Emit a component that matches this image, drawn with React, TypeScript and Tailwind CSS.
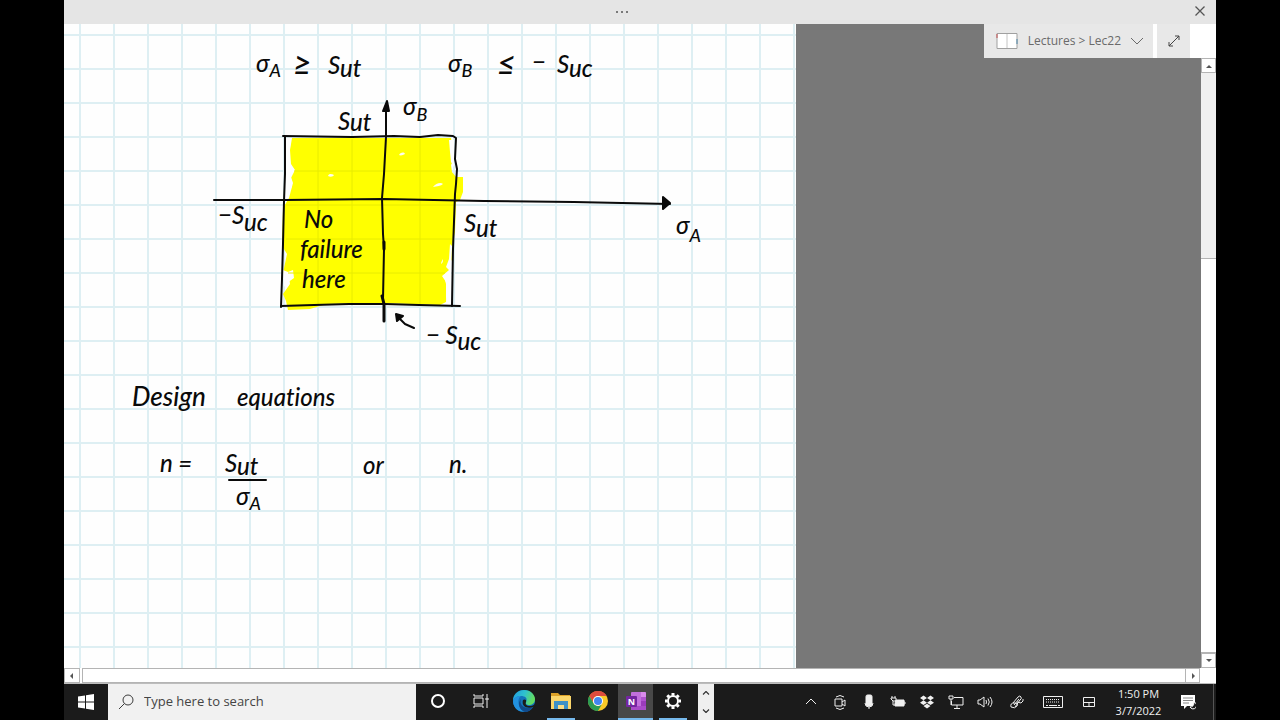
import type { ReactNode } from "react";

const GRID_X = Array.from({ length: 22 }, (_, i) => 16 + i * 34);
const GRID_Y = Array.from({ length: 19 }, (_, i) => 11 + i * 34);

type InkProps = { x: number; y: number; size?: number; sub?: string; subY?: number; children: string };

function Ink({ x, y, size = 24, sub, subY = 5, children }: InkProps) {
  return (
    <text x={x} y={y} fontSize={size}>
      {children}
      {sub && (
        <tspan dy={subY} fontSize={sub.length > 1 ? 24 : 18}>
          {sub}
        </tspan>
      )}
    </text>
  );
}

function NotePage() {
  return (
    <svg
      viewBox="0 0 732 644"
      preserveAspectRatio="xMinYMin slice"
      className="h-full w-full font-['Lato','Noto_Sans',sans-serif] font-medium italic [font-variant-ligatures:none]"
      role="img"
      aria-label="Handwritten notes"
    >
      <rect width="732" height="644" fill="#fefefe" />
      <g stroke="#deeff3" strokeWidth="2">
        {GRID_X.map((x) => (
          <path key={x} d={`M${x} 0V644`} />
        ))}
        {GRID_Y.map((y) => (
          <path key={y} d={`M0 ${y}H732`} />
        ))}
      </g>
      <path
        fill="#ffff00"
        d="M227 114 387 114 388 124 390 135 387 141 388 148 392 153 399 153 399 168 396 176 392 178 391 208 388 222 389 234 385 240 386 248 381 256 383 264 382 278 376 281 318 279 262 280 246 285 224 286 222 277 219 270 226 260 225 252 219 249 223 230 218 222 219 184 225 174 229 159 224 144Z"
      />
      <path
        fill="#fefefe"
        d="M224 114h4l-2 12 1 14 4 6-4 8 1 8-4 10h-3V115ZM385 116h5v27l-3-5-1-10ZM219 246l5 2 5-2 1 8-7 5-3 4ZM386 220l2 2-1 28-2 4 1 18-3 7-1-6v-15l-4-6 7-6-3-3 3-8Z"
      />
      <g stroke="#e8ec00" strokeWidth="1">
        <path d="M254 115V281M288 115V279M356 115V280M230 147H386M222 181H391M222 215H388M224 249H381" />
      </g>
      <g fill="#fdfdf0">
        <path d="M264 152c1-3 4-2 6-1-1 2-4 2-6 1Z" />
        <path d="M335 131c2-3 5-3 6-1-2 1-4 2-6 1Z" />
        <path d="M369 163c3-4 8-5 10-3-2 2-6 2-10 3Z" />
        <path d="M377 240c2-1 2-3 2-5-1 2-2 3-2 5Z" />
      </g>
      <g fill="none" stroke="#0a0a0a" strokeWidth="2" strokeLinecap="round" strokeLinejoin="round">
        <path d="M219 112 288 113 330 112 356 113 374 111 389 112 392 114 391 135 393 145 392 160 391 170 389 225 388 282" />
        <path d="M221 113 221 150 220 177 219 220 218 255 217 283" />
        <path d="M217 282 250 281 285 280 321 280 355 281 396 282" />
        <path d="M150 176 220 176 320 175 420 177 510 178 606 180" />
        <path d="M322 83 322 113 320 150 318 174 319 210 320 225 319 275" />
        <path strokeWidth="3" d="M320 218 320 225M318 272 320 280 320 297" />
        <path fill="#0a0a0a" d="M323 77 319 87 325 87Z" />
        <path fill="#0a0a0a" d="M599 173 606 179 599 185Z" />
        <path d="M350 304 341 300 333 292" />
        <path fill="#0a0a0a" d="M332 290 333 297 339 292Z" />
        <path d="M165 456 186 456 202 456" />
      </g>
      <g fill="#0a0a0a">
        <Ink x={192} y={48} sub="A">σ</Ink>
        <Ink x={229} y={51} size={32}>≥</Ink>
        <Ink x={264} y={50} sub="ut" subY={3}>S</Ink>
        <Ink x={384} y={48} sub="B">σ</Ink>
        <Ink x={433} y={51} size={32}>≤</Ink>
        <Ink x={468} y={47}>−</Ink>
        <Ink x={493} y={49} sub="uc" subY={4}>S</Ink>
        <Ink x={339} y={91} sub="B" subY={6}>σ</Ink>
        <Ink x={274} y={106} sub="ut" subY={1}>S</Ink>
        <Ink x={154} y={200} sub="uc" subY={7}>−S</Ink>
        <Ink x={400} y={208} sub="ut" subY={5}>S</Ink>
        <Ink x={612} y={210} sub="A" subY={8}>σ</Ink>
        <Ink x={240} y={204}>No</Ink>
        <Ink x={236} y={234}>failure</Ink>
        <Ink x={238} y={264}>here</Ink>
        <Ink x={362} y={320} sub="uc" subY={6}>− S</Ink>
        <Ink x={68} y={382} size={26}>Design</Ink>
        <Ink x={173} y={382}>equations</Ink>
        <Ink x={96} y={448}>n =</Ink>
        <Ink x={161} y={448} sub="ut" subY={3}>S</Ink>
        <Ink x={172} y={481} sub="A">σ</Ink>
        <Ink x={299} y={450}>or</Ink>
        <Ink x={385} y={449}>n.</Ink>
      </g>
    </svg>
  );
}

function Line({ children, className = "size-4" }: { children: ReactNode; className?: string }) {
  return (
    <svg
      viewBox="0 0 16 16"
      className={className}
      fill="none"
      stroke="currentColor"
      strokeWidth="1"
      strokeLinejoin="round"
      aria-hidden="true"
    >
      {children}
    </svg>
  );
}

function ScrollButton({ label, d, className }: { label: string; d: string; className: string }) {
  return (
    <button
      type="button"
      aria-label={label}
      className={`flex shrink-0 items-center justify-center border border-[#b4b4b4] bg-white text-[#555] ${className}`}
    >
      <svg viewBox="0 0 8 8" className="size-2" fill="currentColor" aria-hidden="true">
        <path d={d} />
      </svg>
    </button>
  );
}

function SidePanel() {
  return (
    <div className="flex min-w-0 flex-1 flex-col bg-[#787878]">
      <div className="flex h-[34px] justify-end">
        <button
          type="button"
          className="flex items-center bg-[#e8e8e8] pr-2 pl-3 text-xs whitespace-nowrap text-[#6a6a6a]"
        >
          <svg viewBox="0 0 22 18" className="mr-2.5 h-[18px] w-[22px]" aria-hidden="true">
            <path d="M1 1.500h20v15H1Z" fill="#fff" stroke="#a0a0a0" />
            <path d="M11 2v14" stroke="#c4c4c4" strokeWidth="1" />
            <path d="M1 2v4" stroke="#c65050" />
            <path d="M21 7v5" stroke="#4f87a8" />
          </svg>
          <span>Lectures &gt; Lec22</span>
          <Line className="ml-2 size-4">
            <path d="m2 5 6 6 6-6" />
          </Line>
        </button>
        <div className="w-1 bg-white" />
        <button
          type="button"
          aria-label="Full screen"
          className="flex w-[33px] items-center justify-center bg-[#e8e8e8] text-[#444]"
        >
          <Line>
            <path d="M3 13 13 3M9 3h4v4M3 9v4h4" />
          </Line>
        </button>
        <div className="w-[26px] bg-white" />
      </div>
      <div className="flex flex-1 justify-end">
        <div className="flex w-[15px] flex-col bg-[#f0f0f0]">
          <ScrollButton label="Scroll up" d="M1 6 4 3l3 3Z" className="h-[15px]" />
          <div className="h-[185px] bg-[#f0f0f0]" />
          <div className="flex-1 border-y border-[#b4b4b4] bg-white" />
          <ScrollButton label="Scroll down" d="M1 2h6L4 5Z" className="h-[15px]" />
        </div>
      </div>
    </div>
  );
}

function EdgeIcon() {
  return (
    <svg viewBox="0 0 24 24" className="size-6" aria-hidden="true">
      <defs>
        <linearGradient id="edge-top" x1="0" x2="1" y1="0" y2="0.3">
          <stop offset="0" stopColor="#1f9be0" />
          <stop offset="0.55" stopColor="#2fc1cf" />
          <stop offset="1" stopColor="#62dc62" />
        </linearGradient>
      </defs>
      <circle cx="12" cy="12" r="11" fill="#1473ba" />
      <path d="M1 12C1 5 6 1 12 1c7 0 11 5 11 9 0 4-3 6-6 6-2 0-4-1-3-3 2-4-1-6-5-6-4 0-7 2-8 5Z" fill="url(#edge-top)" />
      <path d="M1 12c1-3 4-5 8-5-4 2-4 12 4 15C6 24 1 18 1 12Z" fill="#2291df" />
      <path d="M9 10c-2 5 2 9 7 9 3 0 4-1 5-1-2 3-5 5-8 5-6-2-8-9-4-13Z" fill="#114a8b" />
      <path d="M11 11c1-1 4-1 3 2-1 2 0 4 4 4 3 0 5-2 5-3 0 3-1 4-2 4-5 2-12 0-10-7Z" fill="#1b1b1b" />
    </svg>
  );
}

function FolderIcon() {
  return (
    <svg viewBox="0 0 22 20" className="h-5 w-[22px]" aria-hidden="true">
      <path d="M1 2h7l2 2h10v4H1Z" fill="#dca127" />
      <path d="M1 5h20v13H1Z" fill="#fbd66b" />
      <path d="M4 18v-8h14v8h-4v-4H8v4Z" fill="#3e91c7" />
      <path d="M8 14h6v4H8Z" fill="#f8dc88" />
    </svg>
  );
}

function ChromeIcon() {
  return (
    <svg viewBox="0 0 20 20" className="size-5" aria-hidden="true">
      <circle cx="10" cy="10" r="10" fill="#f9c927" />
      <path d="M1.3 5A10 10 0 0 1 18.7 5H10a5 5 0 0 0-4.3 7.5Z" fill="#dd4b3e" />
      <path d="M1.3 5A10 10 0 0 0 10 20l4.3-7.5a5 5 0 0 1-8.6 0Z" fill="#2c9c53" />
      <circle cx="10" cy="10" r="5" fill="#fff" />
      <circle cx="10" cy="10" r="4" fill="#4386ef" />
    </svg>
  );
}

function OneNoteIcon() {
  return (
    <svg viewBox="0 0 20 20" className="size-5" aria-hidden="true">
      <rect x="5" y="1" width="15" height="18" rx="1" fill="#c270dc" />
      <path d="M15 1h4l1 1v4h-5Z" fill="#d98bec" />
      <path d="M15 6h5v4h-5Z" fill="#b154d0" />
      <path d="M15 10h5v5h-5Z" fill="#9a3bbb" />
      <path d="M5 15h15v3l-1 1H6l-1-1Z" fill="#a94bc9" />
      <rect x="0" y="5" width="11" height="11" rx="1" fill="#7425a0" />
      <text x="5.5" y="14" fontSize="9" fontWeight="700" textAnchor="middle" fill="#fff">
        N
      </text>
    </svg>
  );
}

function GearIcon() {
  return (
    <svg viewBox="0 0 18 18" className="size-[18px]" fill="none" stroke="#fff" aria-hidden="true">
      <circle cx="9" cy="9" r="5" strokeWidth="2" />
      <path
        strokeWidth="3"
        d="M9 1v2.500M9 14.500V17M1 9h2.500M14.500 9H17M3.300 3.300l1.800 1.800M12.900 12.900l1.800 1.800M3.300 14.700l1.800-1.800M12.900 5.100l1.800-1.800"
      />
    </svg>
  );
}

type AppButtonProps = { label: string; width: string; open?: boolean; active?: boolean; children: ReactNode };

function AppButton({ label, width, open, active, children }: AppButtonProps) {
  return (
    <button
      type="button"
      aria-label={label}
      className={`flex shrink-0 flex-col items-center ${width} ${active ? "bg-[#484848]" : ""}`}
    >
      <span className="flex flex-1 items-center">{children}</span>
      <span className={`h-0.5 ${active ? "w-full" : "w-7"} ${open ? "bg-[#76b9ed]" : ""}`} />
    </button>
  );
}

function TrayButton({ label, width = "w-[29px]", children }: { label: string; width?: string; children: ReactNode }) {
  return (
    <button type="button" aria-label={label} className={`flex shrink-0 items-center justify-center ${width}`}>
      {children}
    </button>
  );
}

function Taskbar() {
  return (
    <footer className="flex h-9 bg-[#1b1b1b] text-[#f0f0f0]">
      <button type="button" aria-label="Start" className="flex w-11 shrink-0 items-center justify-center">
        <svg viewBox="0 0 16 16" className="size-4" fill="#fff" aria-hidden="true">
          <path d="M0 2.500 7 1.400V7.500H0ZM8 1.200 16 0V7.500H8ZM0 8.500H7V14.600L0 13.500ZM8 8.500H16V16L8 14.800Z" />
        </svg>
      </button>
      <label className="flex min-w-0 flex-[0_1_308px] items-center gap-2.5 bg-[#f1f1f1] pl-2.5 text-[#3c3c3c]">
        <Line>
          <circle cx="10" cy="6" r="5" />
          <path d="M6.500 9.500 1 15" />
        </Line>
        <input
          type="text"
          aria-label="Search"
          placeholder="Type here to search"
          className="min-w-0 flex-1 bg-transparent text-[13px] outline-none placeholder:text-[#444]"
        />
      </label>
      <AppButton label="Cortana" width="w-11">
        <svg viewBox="0 0 14 14" className="size-3.5" fill="none" stroke="#fff" strokeWidth="2" aria-hidden="true">
          <circle cx="7" cy="7" r="6" />
        </svg>
      </AppButton>
      <AppButton label="Task view" width="w-[42px]">
        <Line>
          <path d="M1 1v2h9V1M1 5h9v6H1ZM1 15v-2h9v2M14 1v3M14 8v7M13 5h2v2h-2Z" />
        </Line>
      </AppButton>
      <AppButton label="Microsoft Edge" width="w-[43px]">
        <EdgeIcon />
      </AppButton>
      <AppButton label="File Explorer" width="w-8" open>
        <FolderIcon />
      </AppButton>
      <AppButton label="Google Chrome" width="w-[41px]">
        <ChromeIcon />
      </AppButton>
      <AppButton label="OneNote" width="w-[35px]" open active>
        <OneNoteIcon />
      </AppButton>
      <AppButton label="Settings" width="w-10" open>
        <GearIcon />
      </AppButton>
      <div className="ml-[5px] flex w-4 shrink-0 flex-col bg-[#efefef] text-[#333]">
        <button type="button" aria-label="Previous apps" className="flex flex-1 items-center justify-center">
          <Line className="size-3">
            <path strokeWidth="1.500" d="m4 10 4-4 4 4" />
          </Line>
        </button>
        <button type="button" aria-label="More apps" className="flex flex-1 items-center justify-center">
          <Line className="size-3">
            <path strokeWidth="1.500" d="m4 6 4 4 4-4" />
          </Line>
        </button>
      </div>
      <div className="ml-auto flex shrink-0">
        <TrayButton label="Show hidden icons">
          <Line>
            <path d="m3 10 5-5 5 5" />
          </Line>
        </TrayButton>
        <TrayButton label="Camera">
          <Line>
            <path d="M3 5h7v7H3ZM10 8l3-2v6l-3-2M4 3q4-3 8 0M4 14q4 3 8 0" />
          </Line>
        </TrayButton>
        <TrayButton label="Microphone">
          <Line>
            <rect x="5" y="1" width="6" height="11" rx="1.500" fill="currentColor" />
            <path d="M4 9q0 4 4 4t4-4M8 13v2" />
          </Line>
        </TrayButton>
        <TrayButton label="Battery">
          <Line>
            <path d="M6 6h8v6H5V9Z" fill="currentColor" />
            <path d="M1 4h5v3H3L1 5ZM3 7v4h2M14 8h1v2h-1M2 2v2M5 2v2" />
          </Line>
        </TrayButton>
        <TrayButton label="Dropbox">
          <Line>
            <path
              stroke="none"
              fill="currentColor"
              d="m4.500 1.500 3.500 2.400-3.500 2.400L1 3.900Zm7 0L15 3.900l-3.500 2.400L8 3.900Zm-7 4.800L8 8.700l-3.500 2.400L1 8.700Zm7 0L15 8.700l-3.500 2.400L8 8.700ZM8 9.800l3.500 2.200L8 14.500l-3.500-2.500Z"
            />
          </Line>
        </TrayButton>
        <TrayButton label="Network">
          <Line>
            <path d="M6 3.500h9v7.500H3.500V7M9 11v3M6 14.500h6M1 2h4v3H1ZM3 5v6" />
          </Line>
        </TrayButton>
        <TrayButton label="Volume">
          <Line>
            <path d="M1 6h2l4-3v10L3 10H1ZM9 6q1 2 0 4M11 4.500q2.500 3.500 0 7M13 3q4 5 0 10" />
          </Line>
        </TrayButton>
        <TrayButton label="Windows Ink" width="w-[35px]">
          <Line>
            <path d="M4 9 9 3q2-2 3 0t-1 3L6 13M2 13q-1-4 3-4 5 0 3 3-2 3-6 1ZM8 8l4 1q3-2 2-4M5 11l5-6" />
          </Line>
        </TrayButton>
        <TrayButton label="Touch keyboard" width="w-[37px]">
          <svg viewBox="0 0 20 12" className="h-3 w-5" fill="none" stroke="currentColor" aria-hidden="true">
            <path d="M.5.5h19v11H.5Z" />
            <path strokeDasharray="1 1" d="M3 3.500h14M3 6h14" />
            <path d="M3 9.500h2M6 9.500h8M15 9.500h2" />
          </svg>
        </TrayButton>
        <TrayButton label="Touchpad" width="w-[35px]">
          <Line>
            <path d="M2.500 3.500h11v9h-11ZM2.500 8.500h11M8 8.500v4" />
          </Line>
        </TrayButton>
        <button type="button" className="w-[65px] text-center text-[11px] leading-[17px]">
          <span className="block">1:50 PM</span>
          <span className="block">3/7/2022</span>
        </button>
        <TrayButton label="Notifications" width="w-[34px]">
          <Line>
            <path d="M1 1h14v11H7l-3 3v-3H1Z" fill="#fff" stroke="none" />
            <path d="M3 4h10M3 6.500h10M3 9h6" stroke="#888" />
            <path d="M14 8a3.500 3.500 0 1 1-4 5q4 0 4-5Z" fill="#1b1b1b" stroke="#fff" />
          </Line>
        </TrayButton>
        <div className="mr-0.5 ml-2 w-px bg-[#555]" />
      </div>
    </footer>
  );
}

export default function App() {
  return (
    <div className="min-h-screen bg-black px-16 font-['Open_Sans','Noto_Sans',sans-serif]">
      <div className="flex min-h-screen flex-col bg-white">
        <header className="flex h-6 items-center bg-[#e5e5e5] pr-2 text-[#555]">
          <div className="flex flex-1 justify-center">
            <button type="button" aria-label="More options">
              <svg viewBox="0 0 14 4" className="h-1 w-3.5" fill="currentColor" aria-hidden="true">
                <circle cx="2" cy="2" r="1" />
                <circle cx="7" cy="2" r="1" />
                <circle cx="12" cy="2" r="1" />
              </svg>
            </button>
          </div>
          <button type="button" aria-label="Close" className="flex w-7 justify-end pb-1.5">
            <Line className="size-4">
              <path strokeWidth="1.300" d="m3.500 5.500 9 9M12.500 5.500l-9 9" />
            </Line>
          </button>
        </header>
        <main className="flex min-h-0 flex-1">
          <section className="min-w-0 flex-[0_1_732px] overflow-hidden">
            <NotePage />
          </section>
          <SidePanel />
        </main>
        <div className="flex h-4 border-b border-[#bcbcbc] bg-white pr-4">
          <ScrollButton label="Scroll left" d="M5 1v6L2 4Z" className="w-4" />
          <div className="ml-0.5 flex-1 border-y border-l border-[#b4b4b4] bg-white" />
          <ScrollButton label="Scroll right" d="M3 1v6l3-3Z" className="w-[15px]" />
        </div>
        <Taskbar />
      </div>
    </div>
  );
}
